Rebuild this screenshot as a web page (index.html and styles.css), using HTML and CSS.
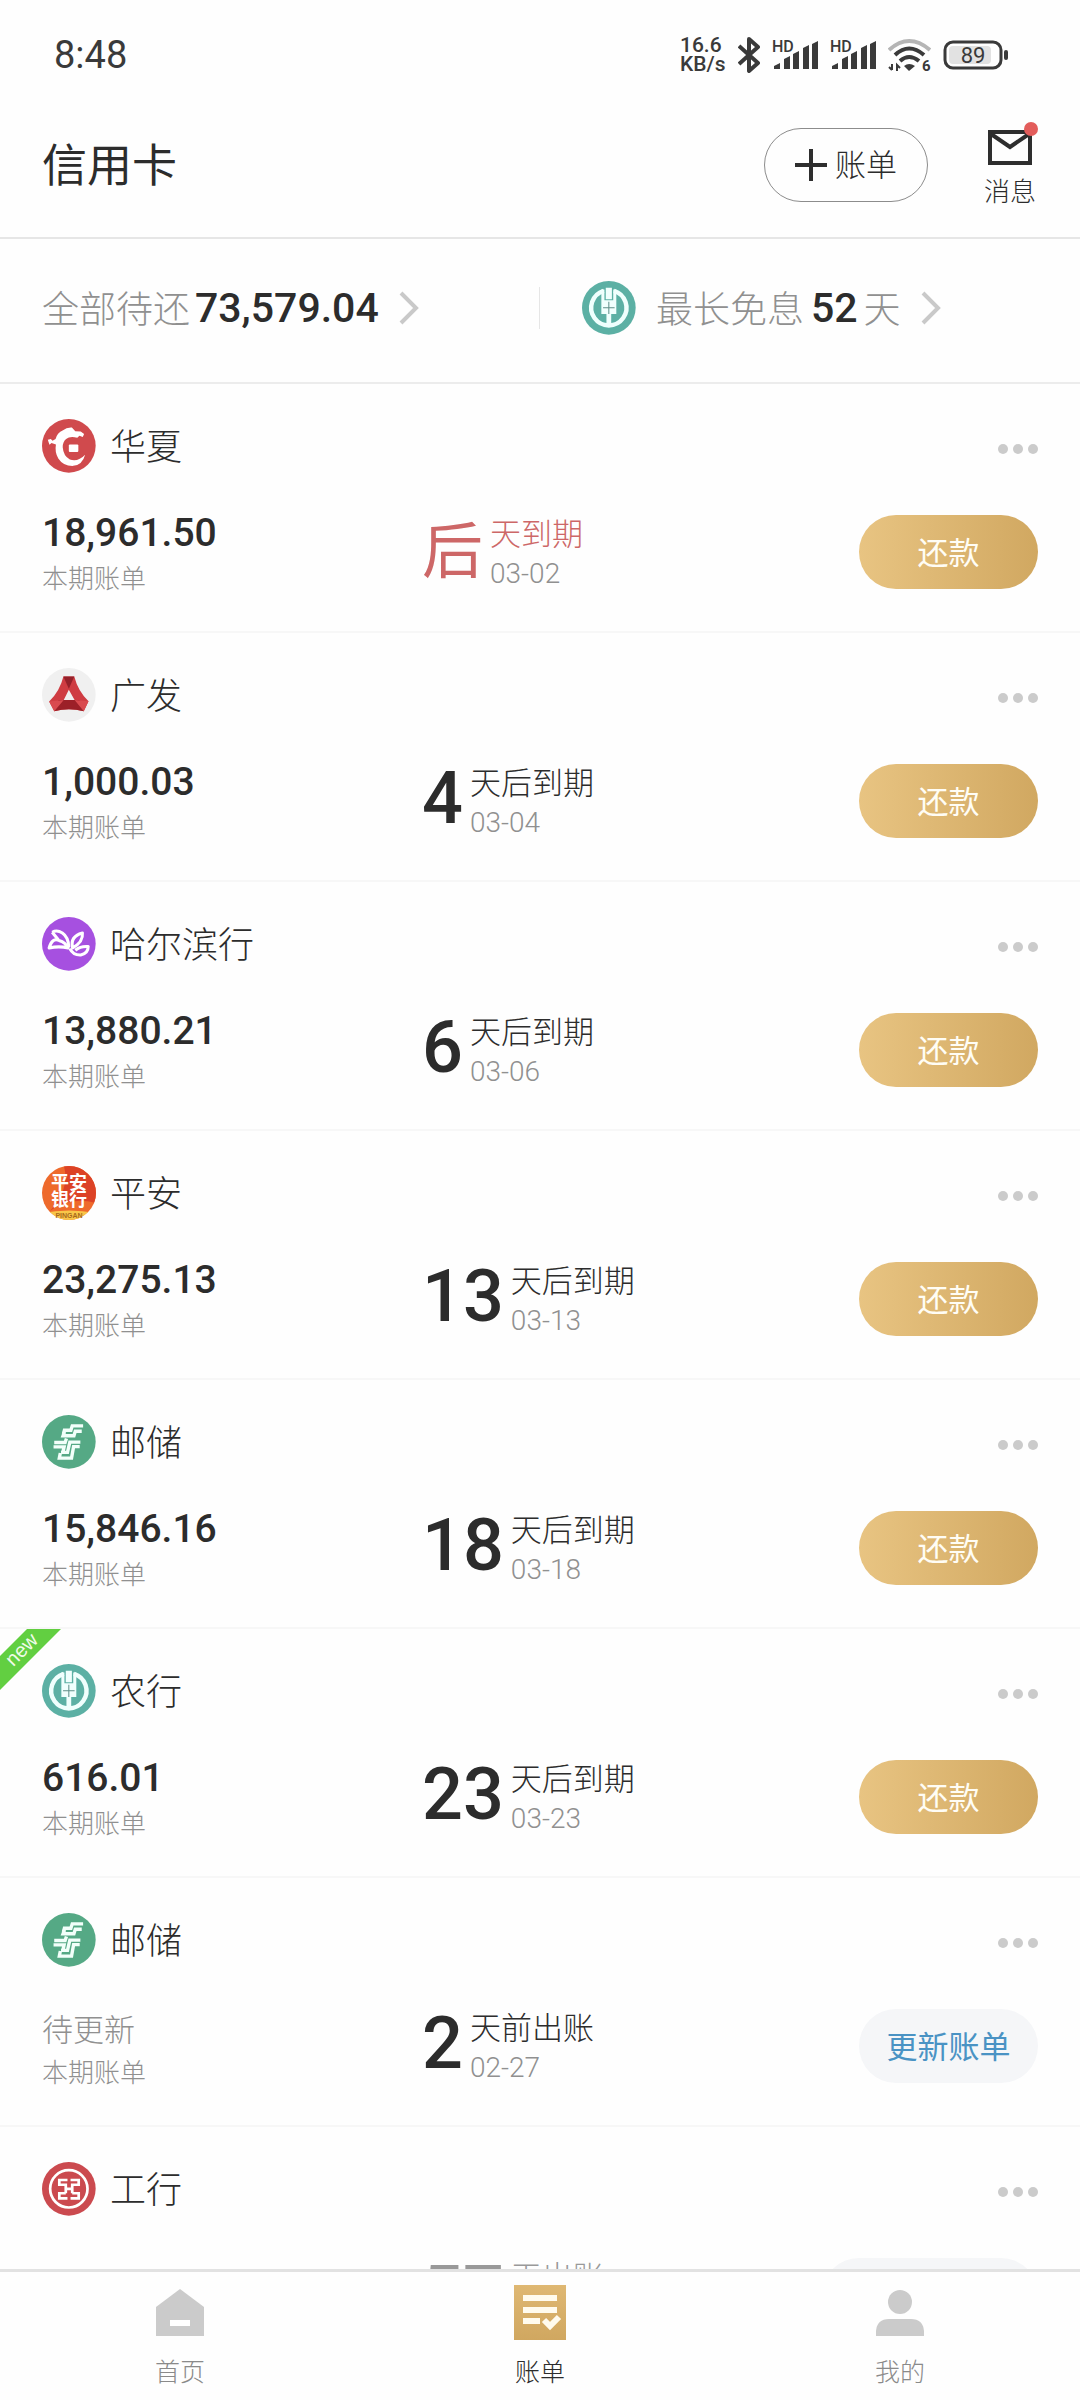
FILE: index.html
```html
<!DOCTYPE html>
<html lang="zh-CN">
<head>
<meta charset="utf-8">
<meta name="viewport" content="width=device-width, initial-scale=1">
<title>信用卡</title>
<link rel="stylesheet" href="styles.css">
</head>
<body>
<svg class="defs" aria-hidden="true">
  <symbol id="huaxia" viewBox="36 29 159 159">
    <circle cx="115" cy="108" r="79" fill="#d04a4d"/>
    <path d="M53 90 L62 88 L67 93 L76 88 Q80 70 98 62 Q108 53 124 54 L134 65 L150 66 L160 73 L156 82 L146 78 L140 84 Q118 78 107 88 Q97 96 97 112 Q99 138 118 148 Q142 156 163 134 Q155 164 128 167 Q99 168 84 145 Q73 127 77 104 L64 100 L58 105 Z" fill="#fff"/>
    <rect x="114" y="103" width="29" height="23" rx="3" fill="#d04a4d"/>
    <rect x="115" y="104" width="28" height="22" rx="3" fill="#fff"/>
  </symbol>
  <symbol id="guangfa" viewBox="36 86 159 159">
    <circle cx="115" cy="165" r="79" fill="#f0f0f0"/>
    <path d="M99 111 H131 Q142 154 173 184 L159 213 Q115 202 72 213 L57 185 Q89 153 99 111 Z M115 150 L100 180 H132 Z" fill="#cf3c42" fill-rule="evenodd"/>
    <path d="M99 111 H131 L115 147 Z" fill="#94212a"/>
    <path d="M85 180 H146 L159 213 Q115 202 72 213 Z" fill="#9c2028"/>
    <path d="M57 185 L100 180 L72 213 Z M173 184 L132 180 L159 213 Z" fill="#d94a4f"/>
  </symbol>
  <symbol id="harbin" viewBox="36 833 159 159">
    <circle cx="115" cy="912" r="79" fill="#a650e0"/>
    <g fill="none" stroke="#fff" stroke-width="9" stroke-linejoin="round">
      <path d="M57 924 Q66 893 86 902 Q106 908 113 924 Q86 918 57 924 Z"/>
      <path d="M66 878 Q80 870 96 880 Q114 892 115 922 M66 878 L84 900"/>
      <path d="M155 880 Q118 890 126 924 Q158 906 155 880 Z"/>
      <path d="M118 926 Q128 946 150 945 Q172 940 172 920 Q150 918 134 931"/>
    </g>
  </symbol>
  <symbol id="post" viewBox="36 828 159 159">
    <circle cx="115" cy="907" r="79" fill="#55a985"/>
    <g fill="none" stroke="#f2fffa" stroke-width="10">
      <path d="M157 860 H125 L121 873 H102 L99 884"/>
      <path d="M153 876 H134 L130 889 H98 L102 878"/>
      <path d="M72 909 H104 L108 897 M70 922 H101 L98 936"/>
      <path d="M149 908 H118 L111 938 H92"/>
      <path d="M147 921 H129 L123 955 H87 L90 940"/>
    </g>
  </symbol>
  <symbol id="nongye" viewBox="126 165 159 159">
    <circle cx="205" cy="244" r="79" fill="#5cb0a4"/>
    <path d="M190 194 A52 52 0 1 0 220 194" fill="none" stroke="#f0fffd" stroke-width="13"/>
    <path d="M183 190 H192 V222 H218 V190 H227 V262 H212 V300 H198 V262 H183 Z M196 185 H214 V219 H196 Z" fill="#f0fffd"/>
    <path d="M205 226 V262 M188 244 H222" stroke="#5f8f88" stroke-width="3"/>
  </symbol>
  <symbol id="gongshang" viewBox="36 38 159 159">
    <circle cx="115" cy="117" r="79" fill="#cb4a4f"/>
    <circle cx="115" cy="117" r="55" fill="none" stroke="#fff" stroke-width="8"/>
    <path d="M111 91 H87 V105 H106 V130 M111 145 H87 V130 H106 M120 91 H144 V105 H125 V130 M120 145 H144 V130 H125 M106 117 H125" fill="none" stroke="#fff" stroke-width="8"/>
  </symbol>
  <symbol id="chevron" viewBox="0 0 20 34"><path d="M2 2 L17 17 L2 32" fill="none" stroke="#c9c9c9" stroke-width="4"/></symbol>
  <symbol id="dots" viewBox="0 0 40 10"><g fill="#cbcbcb"><circle cx="5" cy="5" r="5"/><circle cx="20" cy="5" r="5"/><circle cx="35" cy="5" r="5"/></g></symbol>
  <symbol id="bars" viewBox="0 0 46 32">
    <path d="M2 30 V27 L8 24 V30 Z M12 30 V20 L18 17 V30 Z M21 30 V15 L27 12 V30 Z M31 30 V9 L37 6 V30 Z M40 30 V5 L46 2 V30 Z" fill="#3a3a3a"/>
  </symbol>
</svg>

<div class="app">
  <div class="status">
    <span class="time">8:48</span>
    <div class="status-icons">
      <span class="speed">16.6<br>KB/s</span>
      <svg width="22" height="36" viewBox="0 0 22 36"><path d="M1 9 L20 26 L11 34 V2 L20 10 L1 27" fill="none" stroke="#3a3a3a" stroke-width="4" stroke-linejoin="round"/></svg>
      <svg width="46" height="32"><use href="#bars"/><text x="0" y="13" class="hd">HD</text></svg>
      <svg width="46" height="32"><use href="#bars"/><text x="0" y="13" class="hd">HD</text></svg>
      <svg width="43" height="34" viewBox="0 0 43 34">
        <g fill="none" stroke="#3a3a3a" stroke-width="4">
          <path d="M1 12 Q21 -6 42 12" stroke="#b5b5b5"/>
          <path d="M7 17 Q21 4 36 17"/><path d="M12 23 Q21 15 31 23"/>
        </g>
        <path d="M16 28 Q21 24 27 28 L21 33 Z" fill="#3a3a3a"/>
        <path d="M4 26 V32 M1 29 L4 32 M9 33 V27 L12 30" stroke="#3a3a3a" stroke-width="2" fill="none"/>
        <text x="34" y="33" class="wifi6">6</text>
      </svg>
      <svg width="65" height="30" viewBox="0 0 65 30">
        <rect x="2" y="2" width="56" height="26" rx="8" fill="none" stroke="#3a3a3a" stroke-width="3"/>
        <rect x="6" y="6" width="42" height="18" rx="4" fill="#e2e2e2"/>
        <rect x="61" y="10" width="4" height="10" rx="2" fill="#3a3a3a"/>
        <text x="30" y="23" class="battery">89</text>
      </svg>
    </div>
  </div>

  <header class="header">
    <h1>信用卡</h1>
    <button class="add" type="button">
      <svg width="32" height="32" viewBox="0 0 32 32"><path d="M16 0 V32 M0 16 H32" stroke="#2e2e2e" stroke-width="4"/></svg>
      <span>账单</span>
    </button>
    <button class="message" type="button">
      <svg width="46" height="36" viewBox="0 0 46 36"><rect x="3" y="2" width="40" height="31" fill="none" stroke="#2e2e2e" stroke-width="4"/><path d="M4 4 L23 17 L42 4" fill="none" stroke="#2e2e2e" stroke-width="4"/></svg>
      消息
      <span class="badge"></span>
    </button>
  </header>

  <section class="summary">
    <a class="total" href="#total"><span>全部待还</span><strong>73,579.04</strong><svg class="chevron" width="20" height="34"><use href="#chevron"/></svg></a>
    <a class="free" href="#free"><svg class="logo" width="54" height="54"><use href="#nongye"/></svg><span class="free-label">最长免息</span><strong>52</strong><span>天</span><svg class="chevron" width="20" height="34"><use href="#chevron"/></svg></a>
  </section>

  <ul class="cards">
    <li class="card">
      <div class="head"><svg class="logo" width="54" height="54"><use href="#huaxia"/></svg><h2>华夏</h2><button class="more" type="button" aria-label="更多"><svg width="40" height="10"><use href="#dots"/></svg></button></div>
      <div class="body">
        <div class="bill"><b class="amount">18,961.50</b><span class="label">本期账单</span></div>
        <div class="due urgent"><b class="days word">后</b><div class="when"><span>天到期</span><time>03-02</time></div></div>
        <button class="pay" type="button">还款</button>
      </div>
    </li>
    <li class="card">
      <div class="head"><svg class="logo" width="54" height="54"><use href="#guangfa"/></svg><h2>广发</h2><button class="more" type="button" aria-label="更多"><svg width="40" height="10"><use href="#dots"/></svg></button></div>
      <div class="body">
        <div class="bill"><b class="amount">1,000.03</b><span class="label">本期账单</span></div>
        <div class="due"><b class="days">4</b><div class="when"><span>天后到期</span><time>03-04</time></div></div>
        <button class="pay" type="button">还款</button>
      </div>
    </li>
    <li class="card">
      <div class="head"><svg class="logo" width="54" height="54"><use href="#harbin"/></svg><h2>哈尔滨行</h2><button class="more" type="button" aria-label="更多"><svg width="40" height="10"><use href="#dots"/></svg></button></div>
      <div class="body">
        <div class="bill"><b class="amount">13,880.21</b><span class="label">本期账单</span></div>
        <div class="due"><b class="days">6</b><div class="when"><span>天后到期</span><time>03-06</time></div></div>
        <button class="pay" type="button">还款</button>
      </div>
    </li>
    <li class="card">
      <div class="head">
        <svg class="logo" width="54" height="54" viewBox="0 0 54 54">
          <clipPath id="disc"><circle cx="27" cy="27" r="27"/></clipPath>
          <g clip-path="url(#disc)">
            <rect width="54" height="54" fill="#ee6a2c"/>
            <path d="M22 0 H54 V37 Q28 30 8 45 Q28 24 22 0 Z" fill="#dc4226"/>
            <path d="M0 47 Q27 42 54 47 V54 H0 Z" fill="#f8c648"/>
          </g>
          <text x="27" y="23" class="logo-text">平安</text>
          <text x="27" y="40" class="logo-text">银行</text>
          <text x="27" y="52" class="logo-sub">PINGAN</text>
        </svg>
        <h2>平安</h2><button class="more" type="button" aria-label="更多"><svg width="40" height="10"><use href="#dots"/></svg></button></div>
      <div class="body">
        <div class="bill"><b class="amount">23,275.13</b><span class="label">本期账单</span></div>
        <div class="due"><b class="days">13</b><div class="when"><span>天后到期</span><time>03-13</time></div></div>
        <button class="pay" type="button">还款</button>
      </div>
    </li>
    <li class="card">
      <div class="head"><svg class="logo" width="54" height="54"><use href="#post"/></svg><h2>邮储</h2><button class="more" type="button" aria-label="更多"><svg width="40" height="10"><use href="#dots"/></svg></button></div>
      <div class="body">
        <div class="bill"><b class="amount">15,846.16</b><span class="label">本期账单</span></div>
        <div class="due"><b class="days">18</b><div class="when"><span>天后到期</span><time>03-18</time></div></div>
        <button class="pay" type="button">还款</button>
      </div>
    </li>
    <li class="card">
      <svg class="ribbon" width="61" height="61" viewBox="0 0 61 61"><path d="M27 0 H61 L0 61 V27 Z" fill="#62cf41"/><text x="22" y="27" transform="rotate(-45 22 21)" class="ribbon-text">new</text></svg>
      <div class="head"><svg class="logo" width="54" height="54"><use href="#nongye"/></svg><h2>农行</h2><button class="more" type="button" aria-label="更多"><svg width="40" height="10"><use href="#dots"/></svg></button></div>
      <div class="body">
        <div class="bill"><b class="amount">616.01</b><span class="label">本期账单</span></div>
        <div class="due"><b class="days">23</b><div class="when"><span>天后到期</span><time>03-23</time></div></div>
        <button class="pay" type="button">还款</button>
      </div>
    </li>
    <li class="card">
      <div class="head"><svg class="logo" width="54" height="54"><use href="#post"/></svg><h2>邮储</h2><button class="more" type="button" aria-label="更多"><svg width="40" height="10"><use href="#dots"/></svg></button></div>
      <div class="body">
        <div class="bill"><span class="pending">待更新</span><span class="label">本期账单</span></div>
        <div class="due"><b class="days">2</b><div class="when"><span>天前出账</span><time>02-27</time></div></div>
        <button class="pay update" type="button">更新账单</button>
      </div>
    </li>
    <li class="card">
      <div class="head"><svg class="logo" width="54" height="54"><use href="#gongshang"/></svg><h2>工行</h2><button class="more" type="button" aria-label="更多"><svg width="40" height="10"><use href="#dots"/></svg></button></div>
      <div class="body">
        <div class="bill"></div>
        <div class="due later"><b class="days">57</b><div class="when"><span>天出账</span></div></div>
        <button class="pay update wide" type="button" aria-label="更新账单"></button>
      </div>
    </li>
  </ul>

  <nav class="tabs">
    <a href="#home"><svg width="56" height="56" viewBox="0 0 56 56"><path d="M28 4 L52 22 V51 H4 V22 Z" fill="#cbcbcb"/><rect x="18" y="35" width="20" height="6" fill="#fff"/></svg>首页</a>
    <a class="active" href="#bill" aria-current="page"><svg width="56" height="56" viewBox="0 0 56 56"><defs><linearGradient id="gold" x1="0" y1="0" x2="0" y2="1"><stop offset="0" stop-color="#dfb873"/><stop offset="1" stop-color="#d0a760"/></linearGradient></defs><rect x="2" y="0" width="52" height="55" fill="url(#gold)"/><path d="M11 13 H45 M11 25 H45 M11 36 H28" stroke="#fffbee" stroke-width="6"/><path d="M32 35 L38 41 L47 32" fill="none" stroke="#fffbee" stroke-width="6"/></svg>账单</a>
    <a href="#me"><svg width="56" height="56" viewBox="0 0 56 56"><circle cx="28" cy="17" r="12" fill="#cbcbcb"/><path d="M4 51 V46 Q5 34 17 34 H39 Q51 34 52 46 V51 Z" fill="#cbcbcb"/></svg>我的</a>
  </nav>
</div>
</body>
</html>
```
FILE: styles.css
```css
* { box-sizing: border-box; }

body {
  margin: 0;
  background: #fefefe;
  color: #2c2c2c;
  font-family: Roboto, "Noto Sans CJK SC", sans-serif;
  font-weight: 300;
}

h1, h2, ul { margin: 0; padding: 0; font-weight: 300; }
a { color: inherit; text-decoration: none; }
button { border: 0; padding: 0; background: none; color: inherit; font: inherit; }
svg { display: block; flex: none; }

.defs { position: absolute; width: 0; height: 0; }
.logo { overflow: visible; }

.app { display: flex; flex-direction: column; height: 100vh; }

/* status bar */
.status {
  display: flex;
  flex: none;
  align-items: center;
  justify-content: space-between;
  height: 92px;
  padding: 18px 72px 0 54px;
  color: #3a3a3a;
}
.time { font-size: 38px; font-weight: 400; }
.status-icons { display: flex; align-items: center; gap: 12px; }
.speed { width: 46px; font-size: 21px; line-height: 19px; font-weight: 500; white-space: nowrap; }
.hd { font-size: 16px; font-weight: 500; fill: #3a3a3a; }
.wifi6 { font-size: 15px; font-weight: 700; fill: #3a3a3a; }
.battery { font-size: 22px; font-weight: 400; fill: #3a3a3a; text-anchor: middle; }

/* page header */
.header {
  display: flex;
  flex: none;
  align-items: center;
  height: 147px;
  padding: 0 44px 0 42px;
  border-bottom: 2px solid #e6e6e6;
}
.header h1 { flex: 1; padding-bottom: 5px; font-size: 45px; font-weight: 400; }
.add {
  display: flex;
  align-items: center;
  justify-content: center;
  gap: 8px;
  width: 164px;
  height: 74px;
  margin-right: 56px;
  border: 1px solid #8c8c8c;
  border-radius: 37px;
  font-size: 31px;
}
.add span { padding-bottom: 4px; }
.message {
  position: relative;
  display: flex;
  flex-direction: column;
  align-items: center;
  gap: 11px;
  width: 52px;
  padding-top: 8px;
  font-size: 26px;
  line-height: 30px;
}
.badge {
  position: absolute;
  top: 0;
  right: -2px;
  width: 14px;
  height: 14px;
  border-radius: 50%;
  background: #e35d5b;
}

/* totals */
.summary {
  display: grid;
  grid-template-columns: 1fr 1fr;
  flex: none;
  align-items: center;
  height: 145px;
  padding-bottom: 5px;
  border-bottom: 2px solid #ececec;
  color: #909090;
  font-size: 37px;
}
.summary a { display: flex; align-items: center; }
.summary span { padding-bottom: 3px; }
.summary strong { color: #2c2c2c; font-size: 41px; font-weight: 500; }
.chevron { margin-left: 20px; }
.total { height: 42px; padding-left: 42px; border-right: 1px solid #e6e6e6; }
.total strong { margin-left: 5px; }
.free { padding-left: 42px; }
.free-label { margin-left: 20px; }
.free strong { margin: 0 6px 0 7px; }

/* card list */
.cards { flex: 1; min-height: 0; overflow: hidden; list-style: none; }
.card {
  position: relative;
  height: 249px;
  padding: 26px 42px 0;
  border-bottom: 2px solid #f7f7f7;
}
.head { display: flex; align-items: center; height: 72px; }
.head h2 { flex: 1; margin-left: 14px; padding-bottom: 5px; font-size: 36px; }
.more { padding-top: 6px; }
.body {
  display: grid;
  grid-template-columns: 380px 1fr auto;
  align-items: center;
  height: 84px;
  margin-top: 28px;
}
.bill { display: flex; flex-direction: column; gap: 8px; }
.amount { font-size: 39px; line-height: 46px; font-weight: 500; }
.label { color: #909090; font-size: 26px; line-height: 30px; }
.pending { padding-top: 8px; color: #909090; font-size: 31px; line-height: 38px; }
.due { display: flex; align-items: center; gap: 7px; }
.days { padding-bottom: 4px; font-size: 72px; line-height: 70px; font-weight: 500; }
.word { padding: 0 0 0 0; font-size: 61px; font-weight: 400; }
.when { display: flex; flex-direction: column; gap: 4px; height: 74px; font-size: 31px; line-height: 40px; }
.when time { color: #909090; font-size: 28px; line-height: 30px; }
.urgent { color: #cd6767; }
.later { color: #999; }
.pay {
  width: 179px;
  height: 74px;
  padding-bottom: 4px;
  border-radius: 37px;
  background: linear-gradient(90deg, #e8c482, #d1a861);
  color: #fffdf5;
  font-size: 31px;
  font-weight: 400;
}
.update { background: #f5f6f8; color: #4a93c4; }
.wide { width: 216px; }

.ribbon { position: absolute; top: 0; left: 0; }
.ribbon-text { fill: #effbe9; font: 20px "Liberation Sans", sans-serif; text-anchor: middle; }

.logo-text { fill: #fff; font: 700 18px "Noto Sans CJK SC", sans-serif; text-anchor: middle; }
.logo-sub { fill: #a86a1c; font: 700 7px "Liberation Sans", sans-serif; text-anchor: middle; }

/* bottom tabs */
.tabs {
  display: grid;
  grid-template-columns: repeat(3, 1fr);
  flex: none;
  height: 131px;
  border-top: 3px solid #e2e2e2;
  background: #fefefe;
}
.tabs a {
  display: flex;
  flex-direction: column;
  align-items: center;
  gap: 17px;
  padding-top: 13px;
  color: #8a8a8a;
  font-size: 25px;
  line-height: 30px;
}
.tabs .active { color: #2c2c2c; }
```
